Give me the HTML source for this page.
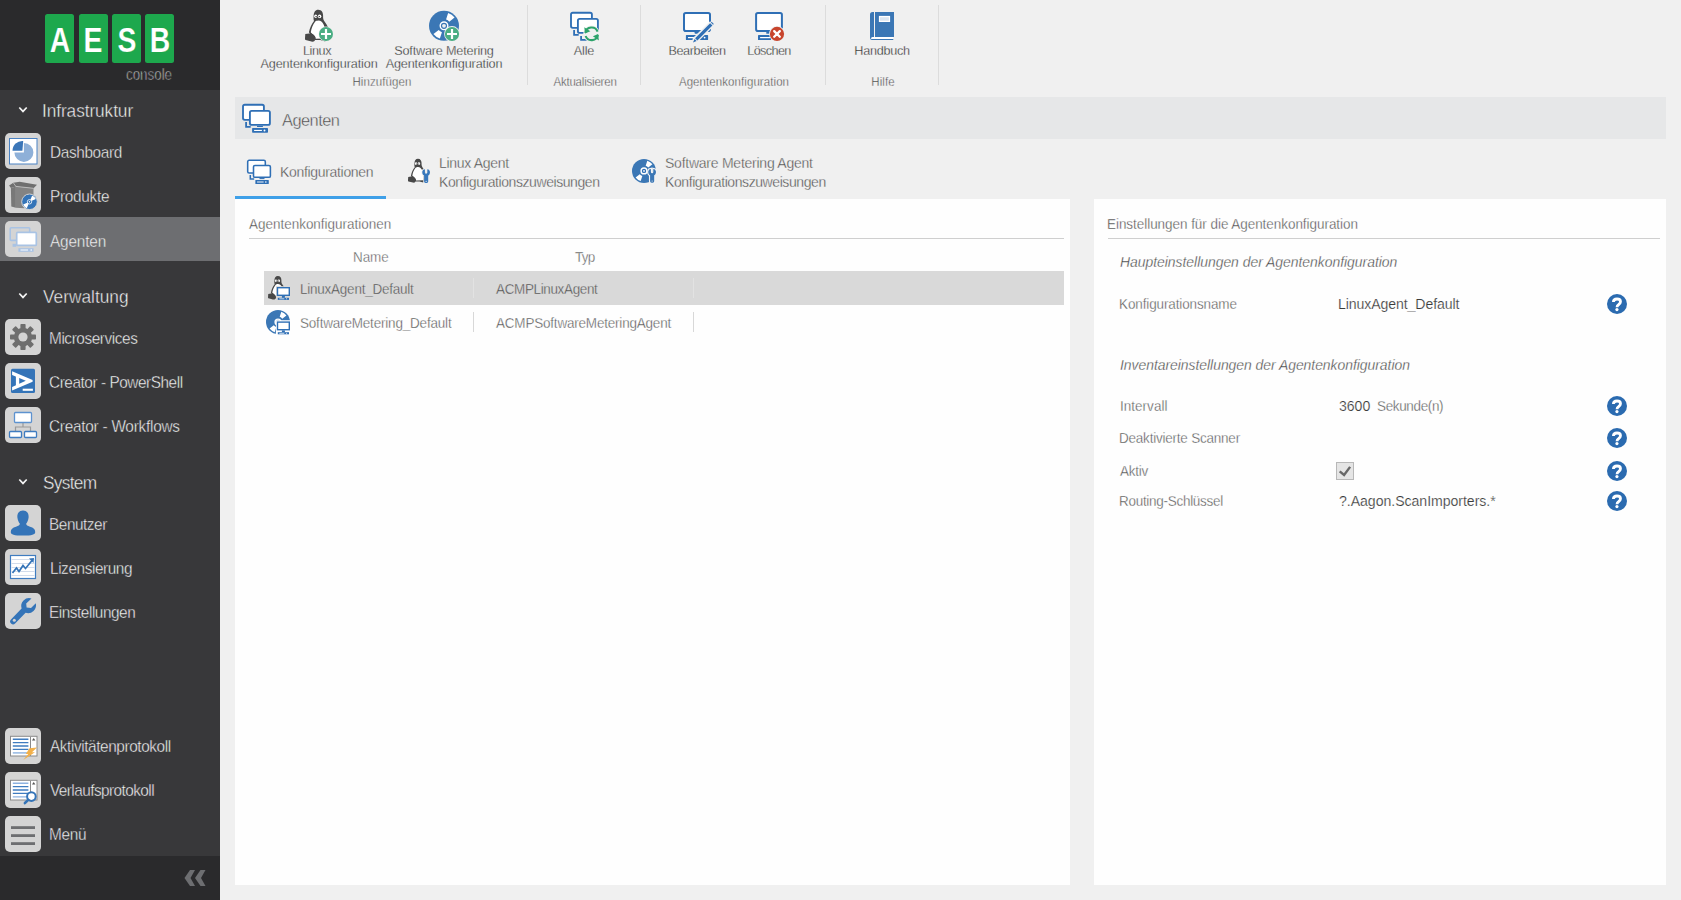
<!DOCTYPE html>
<html lang="de">
<head>
<meta charset="utf-8">
<title>AESB console</title>
<style>
*{box-sizing:border-box;margin:0;padding:0}
html,body{width:1681px;height:900px;overflow:hidden;background:#f0f0f0;font-family:"Liberation Sans",sans-serif;}
.abs{position:absolute}
#side{position:absolute;left:0;top:0;width:220px;height:900px;background:#38383a}
#logo{position:absolute;left:0;top:0;width:220px;height:90px;background:#2a2a2c}
.tile{position:absolute;top:14.3px;width:29.1px;height:48.5px;background:#1da84d;border-radius:2.5px}
.tile span{position:absolute;left:50%;top:3.3px;color:#fff;font-weight:bold;font-size:35px;line-height:44px;transform:translateX(-50%) scaleX(.81);-webkit-text-stroke:0.2px #1da84d}
#console{position:absolute;left:126.3px;top:64px;color:#e6e6e6;font-size:16.4px;line-height:20px;transform:scaleX(.815);transform-origin:0 0;white-space:nowrap}
.sec{position:absolute;left:43px;color:#f4f4f4;font-size:18.2px;letter-spacing:-0.45px;line-height:24px;white-space:nowrap;transform:scaleX(.95);transform-origin:0 50%}
.chev{position:absolute;left:17px;width:12px;height:8px}
.item{position:absolute;left:0;width:220px;height:44px}
.item.sel{background:#6d6e71}
.ib{position:absolute;left:5px;top:3px;width:36px;height:36px;border-radius:5px;background:#d4d4d4}
.ib svg{position:absolute;left:0;top:0;width:36px;height:36px}
.it{position:absolute;left:50px;top:11px;color:#fafafa;font-size:16.2px;letter-spacing:-0.5px;line-height:22px;white-space:nowrap;transform:scaleX(.95);transform-origin:0 50%}
#sidebot{position:absolute;left:0;top:856px;width:220px;height:44px;background:#2a2a2c}
/* toolbar */
.tb{position:absolute;color:#262626;font-size:13.3px;letter-spacing:-0.35px;line-height:13px;text-align:center;white-space:nowrap;transform:translateX(-50%) scaleX(.95)}
.grp{position:absolute;top:75px;color:#3a3a3a;font-size:12.2px;letter-spacing:-0.3px;line-height:14px;white-space:nowrap;transform:translateX(-50%) scaleX(.94)}
.sep{position:absolute;top:5px;width:1px;height:80px;background:#dcdcdc}
#titlebar{position:absolute;left:235px;top:97px;width:1431px;height:42px;background:#e6e7e8}
#titlebar .t{position:absolute;left:47px;top:10px;font-size:17.3px;letter-spacing:-0.4px;color:#444;line-height:22px;transform:scaleX(.95);transform-origin:0 50%}
.tab{position:absolute;color:#444;font-size:14.6px;letter-spacing:-0.35px;line-height:19px;white-space:nowrap;transform:scaleX(.96);transform-origin:0 50%}
#tabline{position:absolute;left:235px;top:196px;width:151px;height:3px;background:#3fa0e8}
.panel{position:absolute;top:199px;height:686px;background:#fefefe}
.ph{position:absolute;top:17px;font-size:14.2px;letter-spacing:-0.4px;color:#444;line-height:18px;white-space:nowrap;transform:scaleX(.95);transform-origin:0 50%}
.hr{position:absolute;height:1px;background:#cfcfcf}
.c{position:absolute;font-size:14.2px;letter-spacing:-0.4px;color:#4c4c4c;line-height:18px;white-space:nowrap;transform:scaleX(.95);transform-origin:0 50%}
.v{position:absolute;font-size:14.7px;letter-spacing:-0.2px;color:#3a3a3a;line-height:18px;white-space:nowrap;transform:scaleX(.96);transform-origin:0 50%}
.ih{position:absolute;font-size:14.5px;font-style:italic;letter-spacing:-0.3px;color:#383838;line-height:18px;white-space:nowrap;transform:scaleX(.96);transform-origin:0 50%}
.q{position:absolute;left:513px;width:20px;height:20px;border-radius:50%;background:#2b6bb0;overflow:hidden}

.sec,.it{-webkit-text-stroke:0.4px #38383a}
#console{-webkit-text-stroke:0.7px #2a2a2c}
.item.sel .it{-webkit-text-stroke:0.4px #6d6e71}
.tb{-webkit-text-stroke:0.3px #f0f0f0}
.grp,.tab{-webkit-text-stroke:0.35px #f0f0f0}
#titlebar .t{-webkit-text-stroke:0.45px #e6e7e8}
.ph,.c,.ih{-webkit-text-stroke:0.35px #fefefe}
.v{-webkit-text-stroke:0.2px #fefefe}
.c.onsel{-webkit-text-stroke:0.35px #d9d9d9}
</style>
</head>
<body>
<div id="side">
  <div id="logo">
    <div class="tile" style="left:45.4px"><span>A</span></div>
    <div class="tile" style="left:78.7px"><span>E</span></div>
    <div class="tile" style="left:112px"><span>S</span></div>
    <div class="tile" style="left:145.4px"><span>B</span></div>
    <div id="console">console</div>
  </div>
  <svg class="chev" style="top:106.300px" viewBox="0 0 12 8"><path d="M2.300 1.500 L6 5.400 L9.700 1.500" fill="none" stroke="#f4f4f4" stroke-width="1.700"/></svg>
  <div class="sec" style="top:99px;letter-spacing:-0.09px;left:42.2px">Infrastruktur</div>
  <div class="item" style="top:130px"><div class="ib"><svg viewBox="0 0 36 36">
    <rect x="4.500" y="5.500" width="27.500" height="25.500" fill="#fff" stroke="#4a82c3" stroke-width="1"/>
    <path d="M18.900 19.400 L18.900 9.900 A9.500 9.500 0 1 1 9.400 19.400 Z" fill="#8eb0d8"/>
    <path d="M17.400 17.800 L18.200 8 A9.800 9.800 0 0 0 7.500 17.800 Z" fill="#3b76b8"/>
  </svg></div><div class="it" style=";letter-spacing:-0.4px;left:50.4px">Dashboard</div></div>
  <div class="item" style="top:174px"><div class="ib"><svg viewBox="0 0 36 36">
    <path d="M5.900 10.900 L10.900 9.400 L10.900 30.800 L6.300 29.400 Z" fill="#787878"/>
    <path d="M10.900 9.400 L28.500 11.300 L28.500 28 L19 31.300 L10.900 30.800 Z" fill="#838383"/>
    <path d="M4.100 8.400 L8.300 5.800 L14.600 4.800 L32 7.800 L28.500 11.300 L10.900 9.400 L5.900 10.900 Z" fill="#6f6f6f"/>
    <path d="M8.300 5.800 L10.900 9.400 L28.500 11.300" fill="none" stroke="#c8c8c8" stroke-width="0.800"/>
    <circle cx="24.500" cy="24.800" r="7.800" fill="#3474b8" stroke="#d4d4d4" stroke-width="1"/>
    <path d="M24.500 24.800 L27.200 18.400 A7 7 0 0 1 30.900 22.100 Z M24.500 24.800 L21.800 31.200 A7 7 0 0 1 18.100 27.500 Z" fill="#fff"/>
    <circle cx="24.500" cy="24.800" r="2.200" fill="#3474b8" stroke="#fff" stroke-width="0.800"/>
    <circle cx="24.500" cy="24.800" r="0.700" fill="#fff"/>
  </svg></div><div class="it" style=";letter-spacing:-0.3px;left:50.4px">Produkte</div></div>
  <div class="item sel" style="top:217px;height:44px"><div class="ib" style="top:4px"><svg viewBox="0 0 36 36">
    <rect x="5.200" y="6.800" width="19.500" height="12.600" rx="1" fill="#d4d4d4" stroke="#a9c3e4" stroke-width="1.600"/>
    <rect x="7.600" y="22.800" width="3.600" height="3" fill="#a9c3e4"/>
    <rect x="11.700" y="11.400" width="19.600" height="13" rx="1" fill="#fff" stroke="#a9c3e4" stroke-width="1.700"/>
    <rect x="13.400" y="27.200" width="15.200" height="3.600" fill="#a9c3e4"/>
    <path d="M15.500 29 H23" stroke="#fff" stroke-width="1"/><circle cx="26.200" cy="29" r="0.800" fill="#fff"/>
  </svg></div><div class="it" style="top:13.0px;letter-spacing:-0.19px;left:49.9px">Agenten</div></div>

  <svg class="chev" style="top:292.300px" viewBox="0 0 12 8"><path d="M2.300 1.500 L6 5.400 L9.700 1.500" fill="none" stroke="#f4f4f4" stroke-width="1.700"/></svg>
  <div class="sec" style="top:285px;letter-spacing:0.01px;left:42.7px">Verwaltung</div>
  <div class="item" style="top:316px"><div class="ib"><svg viewBox="0 0 36 36">
    <g transform="translate(18 18)" fill="#6e6e6e">
      <circle r="9.2"/>
      <g id="t"><rect x="-2.6" y="-13" width="5.2" height="6" rx="0.8"/></g>
      <use href="#t" transform="rotate(45)"/><use href="#t" transform="rotate(90)"/><use href="#t" transform="rotate(135)"/>
      <use href="#t" transform="rotate(180)"/><use href="#t" transform="rotate(225)"/><use href="#t" transform="rotate(270)"/><use href="#t" transform="rotate(315)"/>
      <circle r="4.6" fill="#d4d4d4"/>
    </g>
  </svg></div><div class="it" style=";letter-spacing:-0.45px;left:49.0px">Microservices</div></div>
  <div class="item" style="top:360px"><div class="ib"><svg viewBox="0 0 36 36">
    <rect x="6" y="5.700" width="24" height="24.200" rx="1.500" fill="#3474b8"/>
    <path d="M7.100 8.300 L27.600 17 L27.600 18.700 L7.100 27.500 L7.100 23.900 L20.800 17.800 L7.100 11.900 Z" fill="#fff"/>
    <rect x="10.900" y="13" width="3.300" height="10" fill="#fff"/>
    <rect x="17.700" y="25.700" width="10.200" height="2.100" fill="#fff"/>
  </svg></div><div class="it" style=";letter-spacing:-0.48px;left:49.4px">Creator - PowerShell</div></div>
  <div class="item" style="top:404px"><div class="ib"><svg viewBox="0 0 36 36">
    <path d="M18 15 L18 20 M10.5 24 L10.5 20 L25.5 20 L25.5 24" fill="none" stroke="#9a9a9a" stroke-width="1.2"/>
    <rect x="9.5" y="5.5" width="17" height="10" rx="1" fill="#fff" stroke="#5d92cf" stroke-width="1.3"/>
    <rect x="4.5" y="24.5" width="12" height="6" rx="1" fill="#fff" stroke="#3f7cc0" stroke-width="1.3"/>
    <rect x="19.5" y="24.5" width="12" height="6" rx="1" fill="#fff" stroke="#3f7cc0" stroke-width="1.3"/>
  </svg></div><div class="it" style=";letter-spacing:-0.27px;left:49.4px">Creator - Workflows</div></div>

  <svg class="chev" style="top:478.300px" viewBox="0 0 12 8"><path d="M2.300 1.500 L6 5.400 L9.700 1.500" fill="none" stroke="#f4f4f4" stroke-width="1.700"/></svg>
  <div class="sec" style="top:471px;letter-spacing:-0.72px;left:43.0px">System</div>
  <div class="item" style="top:502px"><div class="ib"><svg viewBox="0 0 36 36">
    <path d="M18 5.5 C22 5.5 24 8.5 23.6 12.5 C23.3 15.5 22 17.6 21.2 18.6 C21.2 20.4 22.5 21 25 21.8 C28.5 22.8 30.2 24.2 30.2 27 C30.2 29.6 27 30.6 18 30.6 C9 30.6 5.8 29.6 5.8 27 C5.8 24.2 7.5 22.8 11 21.8 C13.5 21 14.8 20.4 14.8 18.6 C14 17.6 12.7 15.5 12.4 12.5 C12 8.5 14 5.5 18 5.5 Z" fill="#3474b8"/>
  </svg></div><div class="it" style=";letter-spacing:-0.49px;left:49.0px">Benutzer</div></div>
  <div class="item" style="top:546px"><div class="ib"><svg viewBox="0 0 36 36">
    <rect x="5.5" y="6.5" width="25" height="23" fill="#fff" stroke="#3f7cc0" stroke-width="1.2"/>
    <path d="M6.5 10.5 H29.5 M6.5 14.5 H29.5 M6.5 18.5 H29.5 M6.5 22.5 H29.5 M6.5 26.5 H29.5" stroke="#d2dceb" stroke-width="1"/>
    <path d="M7.5 24 L11.5 19 L14 22.5 L18 16.5 L20.5 19.5 L27 11.5" fill="none" stroke="#3474b8" stroke-width="1.7"/>
    <path d="M24 9.5 L29 9 L28.5 14 Z" fill="#3474b8"/>
  </svg></div><div class="it" style=";letter-spacing:-0.45px;left:49.6px">Lizensierung</div></div>
  <div class="item" style="top:590px"><div class="ib"><svg viewBox="0 0 36 36">
    <path d="M26.5 5.5 A8 8 0 0 0 16.6 15.6 L6 26.4 A2.9 2.9 0 0 0 10.1 30.5 L20.6 19.8 A8 8 0 0 0 30.8 10.2 L26 15 L21.6 14.4 L21.2 10.6 Z" fill="#3474b8"/>
    <circle cx="9.3" cy="27.3" r="1.5" fill="#d4d4d4"/>
  </svg></div><div class="it" style=";letter-spacing:-0.49px;left:49.0px">Einstellungen</div></div>

  <div class="item" style="top:724px"><div class="ib" style="top:4px"><svg viewBox="0 0 36 36">
    <rect x="5.500" y="8.300" width="26.500" height="19.700" fill="#fff" stroke="#8a8a8a" stroke-width="1"/>
    <path d="M25.500 8.800 V28" stroke="#8a8a8a" stroke-width="1"/>
    <path d="M7.800 11.200 H23.400 M7.800 14.600 H23.400 M7.800 18 H23.400 M7.800 21.400 H23.400" stroke="#3f7cc0" stroke-width="1.400"/><path d="M7.800 24.900 H23.400" stroke="#8db2e0" stroke-width="1.400"/>
    <path d="M28.700 10 L30.400 12.500 L27 12.500 Z" fill="#555"/>
    <path d="M24.500 20.300 L32 19.500 L27 24.300 L30 24.300 L18.200 32 L23.300 26 L20.800 26 Z" fill="#f2b04a"/>
  </svg></div><div class="it" style=";letter-spacing:-0.44px;left:50.2px">Aktivitätenprotokoll</div></div>
  <div class="item" style="top:768px"><div class="ib" style="top:4px"><svg viewBox="0 0 36 36">
    <rect x="5.500" y="8.300" width="26.500" height="19.700" fill="#fff" stroke="#8a8a8a" stroke-width="1"/>
    <path d="M25.500 8.800 V28" stroke="#8a8a8a" stroke-width="1"/>
    <path d="M7.800 14.600 H23.400 M7.800 18 H23.400 M7.800 21.400 H23.400" stroke="#3f7cc0" stroke-width="1.400"/><path d="M7.800 11.200 H23.400 M7.800 24.900 H23.400" stroke="#8db2e0" stroke-width="1.400"/>
    <path d="M28.700 10 L30.400 12.500 L27 12.500 Z" fill="#555"/>
    <circle cx="26.400" cy="24.600" r="4.300" fill="#fff" stroke="#3474b8" stroke-width="2"/>
    <path d="M23.300 27.900 L19.900 31" stroke="#3474b8" stroke-width="2.600" stroke-linecap="round"/>
  </svg></div><div class="it" style=";letter-spacing:-0.6px;left:50.4px">Verlaufsprotokoll</div></div>
  <div class="item" style="top:812px"><div class="ib" style="top:4px"><svg viewBox="0 0 36 36">
    <rect x="6" y="10.200" width="24" height="2.800" fill="#6d6e71"/><rect x="6" y="18.200" width="24" height="2.800" fill="#6d6e71"/><rect x="6" y="26.200" width="24" height="2.800" fill="#6d6e71"/>
  </svg></div><div class="it" style=";letter-spacing:-0.28px;left:49.0px">Menü</div></div>
  <div id="sidebot"></div>
  <svg class="abs" style="left:184px;top:869px;width:24px;height:18px" viewBox="0 0 24 18"><path d="M6 1 L11 1 L6.500 9 L11 17 L6 17 L0.500 9 Z M16.500 1 L21.500 1 L17 9 L21.500 17 L16.500 17 L11 9 Z" fill="#6d6e71"/></svg>
</div>
<!-- toolbar icons -->
<svg class="abs" style="left:302px;top:8px;width:34px;height:34px" viewBox="0 0 34 34">
  <g id="tux">
  <path fill="#484848" d="M16.300 1.800 C19.600 1.800 21.300 4.600 21.100 8.200 C21 10.200 21.300 11.600 22.200 12.900 C23.800 15.200 25.600 17.600 26.400 20.400 C27.200 23.200 27.100 26.500 26.400 28.600 L23.200 33.400 L18.300 32 L12.500 32 L6.900 24.300 C7.800 20 9.500 16 12 13 C11.400 11.500 11.500 9.500 11.600 8 C11.700 4.500 13.200 1.800 16.300 1.800 Z"/>
  <path fill="#fff" d="M16.400 12.600 C18.800 12.600 20.300 13.900 21.600 16.500 C23.400 20 24.200 25 23.200 30.400 L13.800 30.700 C13.400 29 12.600 27.600 10.600 26.200 C9.500 25.400 8.900 24.800 8.800 24 C9.500 20.200 10.900 16.500 13.100 13.800 C14 12.800 15 12.600 16.400 12.600 Z"/>
  <path fill="#484848" d="M3.300 26 L9 25.200 C10.600 25.600 12.100 27 13.100 28.600 C13.700 29.600 13.300 30.600 12.600 31.100 L12.900 32.500 C12.100 33.600 10.600 33.900 9.500 33.500 L3.600 31.900 C3 31.700 3 31 3 30 Z"/>
  <ellipse cx="13.700" cy="8.300" rx="1.500" ry="1.800" fill="#fff"/><ellipse cx="17.600" cy="8.300" rx="1.700" ry="1.900" fill="#fff"/>
  <circle cx="14.100" cy="8.600" r="0.700" fill="#222"/><circle cx="17.300" cy="8.600" r="0.700" fill="#222"/>
  <path d="M12.800 10.600 L15.500 9.800 L18.500 10.700 L15.600 12.400 Z" fill="#484848"/>
</g>
  <circle cx="24" cy="26" r="7.500" fill="#f0f0f0"/><circle cx="24" cy="26" r="7" fill="#4aad83"/>
  <path d="M24 21 V31 M19 26 H29" stroke="#fff" stroke-width="2.200"/>
</svg>
<div class="tb" style="left:317.3px;top:44px;letter-spacing:-0.42px">Linux</div>
<div class="tb" style="left:318.7px;top:57.0px;letter-spacing:-0.12px">Agentenkonfiguration</div>

<svg class="abs" style="left:427px;top:8px;width:34px;height:34px" viewBox="0 0 34 34" overflow="visible">
  <circle cx="17" cy="17.800" r="15" fill="#3b77b5"/>
  <path d="M21.140 5.060 A13.400 13.400 0 0 1 27.560 9.550 L22.280 13.670 A6.700 6.700 0 0 0 19.070 11.430 Z" fill="#fff"/>
  <path d="M12.860 30.540 A13.400 13.400 0 0 1 6.440 26.050 L11.720 21.930 A6.700 6.700 0 0 0 14.930 24.170 Z" fill="#fff"/>
  <circle cx="17" cy="17.800" r="3.800" fill="#3b77b5" stroke="#fff" stroke-width="1.400"/>
  <circle cx="17" cy="17.800" r="1.900" fill="#f0f0f0"/>
  <circle cx="25" cy="26" r="7.900" fill="#f0f0f0"/><circle cx="25" cy="26" r="7.100" fill="#4aad83"/>
  <path d="M25 21 V31 M20 26 H30" stroke="#fff" stroke-width="2.200"/>
</svg>
<div class="tb" style="left:444.0px;top:44px;letter-spacing:-0.19px">Software Metering</div>
<div class="tb" style="left:444.3px;top:57.0px;letter-spacing:-0.14px">Agentenkonfiguration</div>
<div class="grp" style="left:381.6px;letter-spacing:0.13px">Hinzufügen</div>
<div class="sep" style="left:527px"></div>

<svg class="abs" style="left:568.900px;top:10.200px;width:36px;height:36px" viewBox="0 0 36 36">
  <use href="#mon2"/>
  <path d="M12.100 26 V29.800 H17.700" fill="none" stroke="#2f6fb5" stroke-width="1.800"/>
  <circle cx="22.600" cy="23.800" r="8.300" fill="#f0f0f0"/>
  <path d="M16.300 22.800 A6.400 6.400 0 0 1 28.600 21.600" fill="none" stroke="#2da36b" stroke-width="2.100"/>
  <path d="M15.300 17.200 L16.100 23.600 L21.300 21.300 Z" fill="#2da36b"/>
  <path d="M28.900 24.800 A6.400 6.400 0 0 1 16.600 26" fill="none" stroke="#2da36b" stroke-width="2.100"/>
  <path d="M29.900 30.400 L29.100 24 L23.900 26.300 Z" fill="#2da36b"/>
</svg>
<div class="tb" style="left:584.4px;top:44px;letter-spacing:-0.21px">Alle</div>
<div class="grp" style="left:585.0px;letter-spacing:-0.2px">Aktualisieren</div>
<div class="sep" style="left:640px"></div>

<svg class="abs" style="left:680px;top:8px;width:36px;height:36px" viewBox="0 0 36 36">
  <rect x="4" y="4.900" width="26" height="18.100" rx="1.800" fill="#fff" stroke="#2f6fb5" stroke-width="2"/>
  <path d="M14.400 24 H19.800 L19.300 25.700 H14.900 Z" fill="#2f6fb5"/>
  <rect x="5.900" y="27.100" width="22.200" height="4.900" rx="0.600" fill="#2f6fb5"/>
  <rect x="8" y="29" width="6.700" height="1.200" fill="#fff"/><circle cx="24.600" cy="29.600" r="0.900" fill="#fff"/>
  <path d="M30.100 13.200 L34.300 17.400 L17.400 34.200 L11.600 35.600 L12.900 30 Z" fill="#f0f0f0"/>
  <path d="M30.100 15.200 L32.400 17.500 L17.400 32.500 L15.100 30.200 Z" fill="#2f6fb5"/>
  <path d="M30.900 14.600 L31.700 13.800 L33.800 15.900 L33 16.700 Z" fill="#2f6fb5"/>
  <path d="M14.600 31 L16.600 33 L13 34.400 Z" fill="#2f6fb5"/>
</svg>
<div class="tb" style="left:697.2px;top:44px;letter-spacing:-0.43px">Bearbeiten</div>
<svg class="abs" style="left:752px;top:8px;width:36px;height:36px" viewBox="0 0 36 36">
  <rect x="4.100" y="4.900" width="25.800" height="18.100" rx="1.800" fill="#fff" stroke="#2f6fb5" stroke-width="2"/>
  <rect x="14.300" y="24" width="3.500" height="1.700" fill="#2f6fb5"/>
  <rect x="6" y="27.100" width="13" height="4.900" rx="0.600" fill="#2f6fb5"/>
  <rect x="8.100" y="29" width="10" height="1.200" fill="#fff"/>
  <circle cx="25" cy="25.900" r="7.900" fill="#f0f0f0"/>
  <circle cx="25" cy="25.900" r="7.100" fill="#c8452d"/>
  <path d="M22.200 23.100 L27.800 28.700 M27.800 23.100 L22.200 28.700" stroke="#fff" stroke-width="2.300" stroke-linecap="round"/>
</svg>
<div class="tb" style="left:768.6px;top:44px;letter-spacing:-0.65px">Löschen</div>
<div class="grp" style="left:734.2px;letter-spacing:0.1px">Agentenkonfiguration</div>
<div class="sep" style="left:825px"></div>

<svg class="abs" style="left:866px;top:8px;width:32px;height:36px" viewBox="0 0 32 36">
  <path d="M5 29 H27.300 V31.500 H5 Z" fill="#fff"/>
  <path d="M4 6.500 Q4 4 6.500 4 L8 4 L8 29 L6.500 29 Q5 29.300 5 30.200 Q5 31.100 6.500 31.100 L27.300 31.100 L27.300 32 L6 32 Q4 32 4 30 Z" fill="#3b77b5"/>
  <rect x="9" y="4" width="19" height="25" fill="#3b77b5"/>
  <rect x="12.900" y="7.900" width="11.200" height="6.100" fill="#fff"/>
  <rect x="14" y="9.200" width="8.900" height="3.600" fill="#dce6f1"/>
</svg>
<div class="tb" style="left:881.8px;top:44px;letter-spacing:-0.3px">Handbuch</div>
<div class="grp" style="left:883.1px;letter-spacing:0.11px">Hilfe</div>
<div class="sep" style="left:938px"></div>
<div id="titlebar"><div class="t" style=";letter-spacing:-0.56px;left:47.2px;top:12.0px">Agenten</div></div>
<svg class="abs" style="left:241px;top:102px;width:32px;height:32px" viewBox="0 0 32 32">
  <g id="mon2"><rect x="2" y="2.700" width="20.900" height="15.100" rx="1.700" fill="#fff" stroke="#2f6fb5" stroke-width="1.850"/>
  <path d="M5.100 20.100 V24.900 H9.700" fill="none" stroke="#2f6fb5" stroke-width="1.800"/>
  <rect x="8.900" y="8.800" width="20" height="14.100" rx="1.700" fill="#fff" stroke="#2f6fb5" stroke-width="1.850"/></g>
  <g id="monbase"><rect x="16" y="23.800" width="5.900" height="1.200" fill="#2f6fb5"/>
  <rect x="11.100" y="26" width="15.900" height="4.800" rx="0.700" fill="#2f6fb5"/>
  <rect x="13.100" y="27.900" width="7.800" height="1.100" fill="#fff"/><circle cx="23.500" cy="28.450" r="0.950" fill="#fff"/></g>
</svg>
<svg class="abs" style="left:246px;top:157.600px;width:27px;height:27px" viewBox="0 0 32 32">
  <use href="#mon2"/><use href="#monbase"/>
</svg>
<div class="tab" style="left:280.2px;top:163.0px;letter-spacing:-0.34px">Konfigurationen</div>
<svg class="abs" style="left:404px;top:156px;width:30px;height:30px" viewBox="404 156 30 30">
  <g transform="translate(405.750 157.450) scale(0.750)"><use href="#tux"/></g>
  <g transform="translate(0 0)"><path d="M422.3 171.5 L423.2 169.7 L424.9 169.3 L424.9 172.4 A1.2 1.2 0 0 0 427.3 172.4 L427.3 169.3 L429 169.7 L429.9 171.5 C430.2 173.5 429.5 174.8 428.2 175.6 L428.2 181.6 A1.4 1.4 0 0 1 426.8 183 L425.5 183 A1.4 1.4 0 0 1 424.1 181.6 L424.1 175.6 C422.8 174.8 422 173.5 422.3 171.5 Z" fill="#3878bc" stroke="#f0f0f0" stroke-width="1.600" paint-order="stroke"/><circle cx="426.150" cy="181.300" r="0.600" fill="#f0f0f0"/></g>
</svg>
<div class="tab" style="left:439.3px;top:154px;letter-spacing:-0.32px">Linux Agent</div>
<div class="tab" style="left:438.9px;top:173px;letter-spacing:-0.45px">Konfigurationszuweisungen</div>
<svg class="abs" style="left:630px;top:157px;width:30px;height:30px" viewBox="630 157 30 30">
  <circle cx="644" cy="170.900" r="12" fill="#3b77b5"/>
  <path d="M647.31 160.72 A10.7 10.7 0 0 1 652.43 164.31 L648.26 167.58 A5.4 5.4 0 0 0 645.67 165.76 Z" fill="#fff"/>
  <path d="M640.69 181.08 A10.7 10.7 0 0 1 635.57 177.49 L639.74 174.22 A5.4 5.4 0 0 0 642.33 176.04 Z" fill="#fff"/>
  <circle cx="644" cy="170.900" r="2.900" fill="#2f6fb5" stroke="#fff" stroke-width="1.400"/>
  <circle cx="644" cy="170.900" r="0.900" fill="#fff"/>
  <g transform="translate(226 -0.3)"><path d="M422.3 171.5 L423.2 169.7 L424.9 169.3 L424.9 172.4 A1.2 1.2 0 0 0 427.3 172.4 L427.3 169.3 L429 169.7 L429.9 171.5 C430.2 173.5 429.5 174.8 428.2 175.6 L428.2 181.6 A1.4 1.4 0 0 1 426.8 183 L425.5 183 A1.4 1.4 0 0 1 424.1 181.6 L424.1 175.6 C422.8 174.8 422 173.5 422.3 171.5 Z" fill="#3b77b5" stroke="#f4f4f4" stroke-width="2.300" paint-order="stroke"/><circle cx="426.150" cy="181.300" r="0.600" fill="#f0f0f0"/></g>
</svg>
<div class="tab" style="left:665.0px;top:154px;letter-spacing:-0.26px">Software Metering Agent</div>
<div class="tab" style="left:665.2px;top:173px;letter-spacing:-0.44px">Konfigurationszuweisungen</div>
<div id="tabline"></div>
<div class="panel" id="pl" style="left:235px;width:835px">
  <div class="ph" style="left:13.5px;letter-spacing:-0.01px;top:16.0px">Agentenkonfigurationen</div>
  <div class="hr" style="left:14px;top:39px;width:815px"></div>
  <div class="c" style="left:117.6px;top:49px;color:#555;letter-spacing:-0.07px">Name</div>
  <div class="c" style="left:339.6px;top:49px;color:#555;letter-spacing:-0.82px">Typ</div>
  <div class="abs" style="left:29px;top:72.300px;width:800px;height:33.500px;background:#d9d9d9"></div>
  <div class="abs" style="left:238px;top:79px;width:1px;height:20px;background:#e2e2e2"></div>
  <div class="abs" style="left:458px;top:79px;width:1px;height:20px;background:#e2e2e2"></div>
  <div class="abs" style="left:238px;top:113px;width:1px;height:20px;background:#d8d8d8"></div>
  <div class="abs" style="left:458px;top:113px;width:1px;height:20px;background:#d8d8d8"></div>
  <svg class="abs" style="left:29px;top:73px;width:30px;height:30px" viewBox="264 272 30 30">
    <g transform="translate(265.800 274.700) scale(0.740)"><use href="#tux"/></g>
    <rect x="276" y="286.200" width="14.800" height="14" fill="#d9d9d9"/>
    <rect x="277.500" y="287.7" width="11.800" height="7.600" fill="#fff" stroke="#2f6fb5" stroke-width="1.400"/>
    <rect x="281.900" y="296.0" width="3" height="1.800" fill="#2f6fb5"/><rect x="277.800" y="297.8" width="11.200" height="2.100" fill="#2f6fb5"/>
    <rect x="279.300" y="298.5" width="5" height="0.700" fill="#fff"/><circle cx="286.600" cy="298.84999999999997" r="0.500" fill="#fff"/>
  </svg>
  <div class="c onsel" style="left:65.4px;top:81px;letter-spacing:-0.24px">LinuxAgent_Default</div>
  <div class="c onsel" style="left:261.1px;top:81px;letter-spacing:-0.37px">ACMPLinuxAgent</div>
  <svg class="abs" style="left:29px;top:107px;width:30px;height:30px" viewBox="264 306 30 30">
    <circle cx="278" cy="322" r="12" fill="#3b77b5"/>
    <path d="M281.31 311.82 A10.7 10.7 0 0 1 286.43 315.41 L282.26 318.68 A5.4 5.4 0 0 0 279.67 316.86 Z" fill="#fff"/>
  <path d="M274.69 332.18 A10.7 10.7 0 0 1 269.57 328.59 L273.74 325.32 A5.4 5.4 0 0 0 276.33 327.14 Z" fill="#fff"/>
    <circle cx="278" cy="322" r="2.900" fill="#2f6fb5" stroke="#fff" stroke-width="1.400"/>
    <rect x="275.900" y="320.200" width="15.200" height="15" fill="#fefefe"/>
    <rect x="277.500" y="322.1" width="11.800" height="7.600" fill="#fff" stroke="#2f6fb5" stroke-width="1.400"/>
    <rect x="281.900" y="330.40000000000003" width="3" height="1.800" fill="#2f6fb5"/><rect x="277.800" y="332.20000000000005" width="11.200" height="2.100" fill="#2f6fb5"/>
    <rect x="279.300" y="332.90000000000003" width="5" height="0.700" fill="#fff"/><circle cx="286.600" cy="333.25" r="0.500" fill="#fff"/>
  </svg>
  <div class="c" style="left:65.2px;top:115px;letter-spacing:-0.19px">SoftwareMetering_Default</div>
  <div class="c" style="left:261.1px;top:115px;letter-spacing:-0.2px">ACMPSoftwareMeteringAgent</div>
</div>
<div class="panel" id="pr" style="left:1094px;width:572px">
  <div class="ph" style="left:13.3px;letter-spacing:-0.04px;top:16.0px">Einstellungen für die Agentenkonfiguration</div>
  <div class="hr" style="left:14px;top:39px;width:552px"></div>
  <div class="ih" style="left:26.0px;top:54px;letter-spacing:-0.02px">Haupteinstellungen der Agentenkonfiguration</div>
  <div class="c" style="left:25.4px;top:96px;letter-spacing:-0.12px">Konfigurationsname</div>
  <div class="v" style="left:243.7px;top:96px;letter-spacing:-0.1px">LinuxAgent_Default</div>
  <div class="q" style="top:95px"><svg viewBox="0 0 20 20" width="20" height="20" style="display:block"><path d="M6.400 8.100 C6.400 5.700 8 5 10 5 C12.200 5 13.500 6.200 13.500 7.800 C13.500 9.300 12.400 10 11.300 10.900 C10.400 11.600 10.050 12.200 10.050 13.200" fill="none" stroke="#fff" stroke-width="2.800"/><circle cx="9.950" cy="15.600" r="1.600" fill="#fff"/></svg></div>
  <div class="ih" style="left:26.0px;top:157px;letter-spacing:-0.03px">Inventareinstellungen der Agentenkonfiguration</div>
  <div class="c" style="left:25.6px;top:198px;letter-spacing:0.03px">Intervall</div>
  <div class="v" style="left:245.1px;top:198px;letter-spacing:-0.05px">3600</div>
  <div class="c" style="left:282.6px;top:198px;letter-spacing:-0.36px">Sekunde(n)</div>
  <div class="q" style="top:197px"><svg viewBox="0 0 20 20" width="20" height="20" style="display:block"><path d="M6.400 8.100 C6.400 5.700 8 5 10 5 C12.200 5 13.500 6.200 13.500 7.800 C13.500 9.300 12.400 10 11.300 10.900 C10.400 11.600 10.050 12.200 10.050 13.200" fill="none" stroke="#fff" stroke-width="2.800"/><circle cx="9.950" cy="15.600" r="1.600" fill="#fff"/></svg></div>
  <div class="c" style="left:25.4px;top:230px;letter-spacing:-0.22px">Deaktivierte Scanner</div>
  <div class="q" style="top:229px"><svg viewBox="0 0 20 20" width="20" height="20" style="display:block"><path d="M6.400 8.100 C6.400 5.700 8 5 10 5 C12.200 5 13.500 6.200 13.500 7.800 C13.500 9.300 12.400 10 11.300 10.900 C10.400 11.600 10.050 12.200 10.050 13.200" fill="none" stroke="#fff" stroke-width="2.800"/><circle cx="9.950" cy="15.600" r="1.600" fill="#fff"/></svg></div>
  <div class="c" style="left:25.6px;top:263px;letter-spacing:-0.23px">Aktiv</div>
  <div class="abs" style="left:242px;top:263px;width:18px;height:18px;background:#e5e5e5;border:1px solid #b8b8b8"></div>
  <svg class="abs" style="left:242px;top:263px;width:18px;height:18px" viewBox="0 0 18 18"><path d="M3.700 9.300 L8.100 13 L14.100 4.900" fill="none" stroke="#686868" stroke-width="2.400"/></svg>
  <div class="q" style="top:262px"><svg viewBox="0 0 20 20" width="20" height="20" style="display:block"><path d="M6.400 8.100 C6.400 5.700 8 5 10 5 C12.200 5 13.500 6.200 13.500 7.800 C13.500 9.300 12.400 10 11.300 10.900 C10.400 11.600 10.050 12.200 10.050 13.200" fill="none" stroke="#fff" stroke-width="2.800"/><circle cx="9.950" cy="15.600" r="1.600" fill="#fff"/></svg></div>
  <div class="c" style="left:25.4px;top:293px;letter-spacing:-0.29px">Routing-Schlüssel</div>
  <div class="v" style="left:245.3px;top:293px;letter-spacing:-0.04px">?.Aagon.ScanImporters.*</div>
  <div class="q" style="top:292px"><svg viewBox="0 0 20 20" width="20" height="20" style="display:block"><path d="M6.400 8.100 C6.400 5.700 8 5 10 5 C12.200 5 13.500 6.200 13.500 7.800 C13.500 9.300 12.400 10 11.300 10.900 C10.400 11.600 10.050 12.200 10.050 13.200" fill="none" stroke="#fff" stroke-width="2.800"/><circle cx="9.950" cy="15.600" r="1.600" fill="#fff"/></svg></div>
</div>
</body>
</html>
